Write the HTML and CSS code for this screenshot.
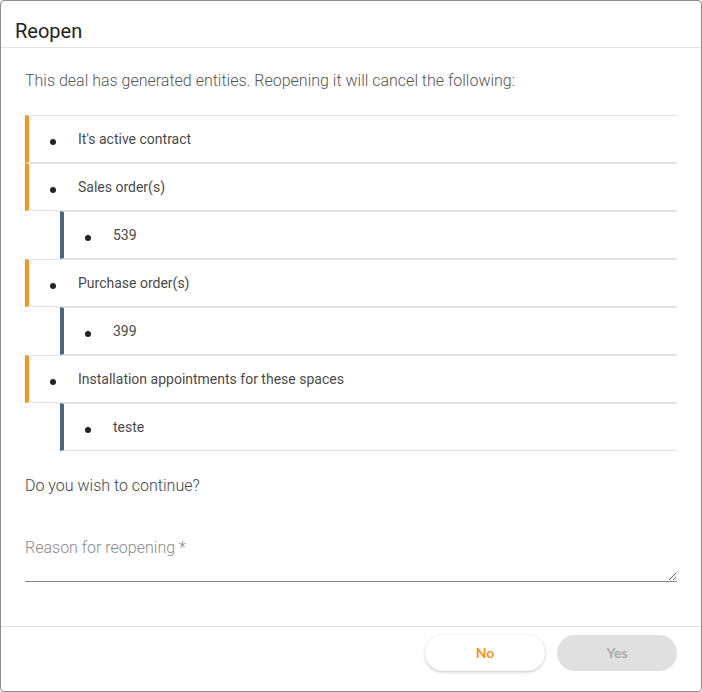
FILE: index.html
```html
<!DOCTYPE html>
<html>
<head>
<meta charset="utf-8">
<link rel="stylesheet" href="styles.css">
</head>
<body>
<div class="dialog">
  <div class="dialog-header">
    <h2 class="dialog-title">Reopen</h2>
  </div>
  <div class="dialog-body">
    <p class="intro">This deal has generated entities. Reopening it will cancel the following:</p>
    <ul class="entity-list">
      <li class="entity"><span class="dot"></span><span class="label">It's active contract</span></li>
      <li class="entity"><span class="dot"></span><span class="label">Sales order(s)</span></li>
      <li class="entity child"><span class="dot"></span><span class="label">539</span></li>
      <li class="entity"><span class="dot"></span><span class="label">Purchase order(s)</span></li>
      <li class="entity child"><span class="dot"></span><span class="label">399</span></li>
      <li class="entity"><span class="dot"></span><span class="label">Installation appointments for these spaces</span></li>
      <li class="entity child"><span class="dot"></span><span class="label">teste</span></li>
    </ul>
    <p class="question">Do you wish to continue?</p>
    <textarea class="reason" placeholder="Reason for reopening *"></textarea>
  </div>
  <div class="dialog-footer">
    <button class="btn btn-no">No</button>
    <button class="btn btn-yes" disabled>Yes</button>
  </div>
</div>
</body>
</html>
```
FILE: styles.css
```css
* { box-sizing: border-box; }
html, body { margin: 0; padding: 0; background: #fff; }
body { font-family: Roboto, "Noto Sans", sans-serif; }

.dialog {
  width: 702px;
  height: 692px;
  border: 1px solid #8c8c8c;
  border-radius: 4px;
  background: #fff;
  display: flex;
  flex-direction: column;
}

.dialog-header {
  height: 47px;
  padding: 18px 14px 0;
  border-bottom: 1px solid #e2e2e2;
}
.dialog-title {
  margin: 0;
  font-size: 20px;
  line-height: 24px;
  font-weight: 400;
  color: #222;
}

.dialog-body {
  flex: 1;
  padding: 0 24px;
}

.intro {
  margin: 22px 0 23px;
  font-size: 16px;
  line-height: 22px;
  font-weight: 300;
  color: #555;
}

.entity-list {
  list-style: none;
  margin: 0;
  padding: 0;
}
.entity {
  display: flex;
  align-items: center;
  height: 48px;
  border-top: 1px solid #e3e3e3;
  border-bottom: 1px solid #e3e3e3;
  border-left: 4px solid #f7941d;
  font-size: 14px;
  color: #4a4a4a;
}
.entity.child {
  margin-left: 35px;
  border-left-color: #466a84;
}
.dot {
  width: 6px;
  height: 6px;
  border-radius: 50%;
  background: #222;
  margin-left: 21px;
  margin-top: 5px;
  flex: none;
}
.label {
  margin-left: 22px;
}

.question {
  margin: 24px 0 0;
  font-size: 16px;
  line-height: 22px;
  font-weight: 300;
  color: #444;
}

.reason {
  display: block;
  width: 100%;
  height: 47px;
  margin-top: 38px;
  padding: 2px 0 0;
  border: none;
  border-bottom: 1px solid #888;
  font-family: Roboto, sans-serif;
  font-size: 16px;
  line-height: 22px;
  font-weight: 300;
  color: #333;
  resize: vertical;
  outline: none;
}
.reason::placeholder { color: #8a8a8a; }

.dialog-footer {
  height: 65px;
  border-top: 1px solid #e2e2e2;
  padding: 8px 24px 0;
  display: flex;
  justify-content: flex-end;
  gap: 12px;
}
.btn {
  width: 120px;
  height: 36px;
  padding: 0 0 2px;
  border-radius: 18px;
  border: none;
  font-family: Lato, sans-serif;
  font-weight: 700;
  font-size: 14px;
}
.btn-no {
  background: #fff;
  color: #f7941d;
  box-shadow: 0 1px 3px rgba(0,0,0,0.25);
}
.btn-yes {
  background: #e0e0e0;
  color: #aaa;
}
```
